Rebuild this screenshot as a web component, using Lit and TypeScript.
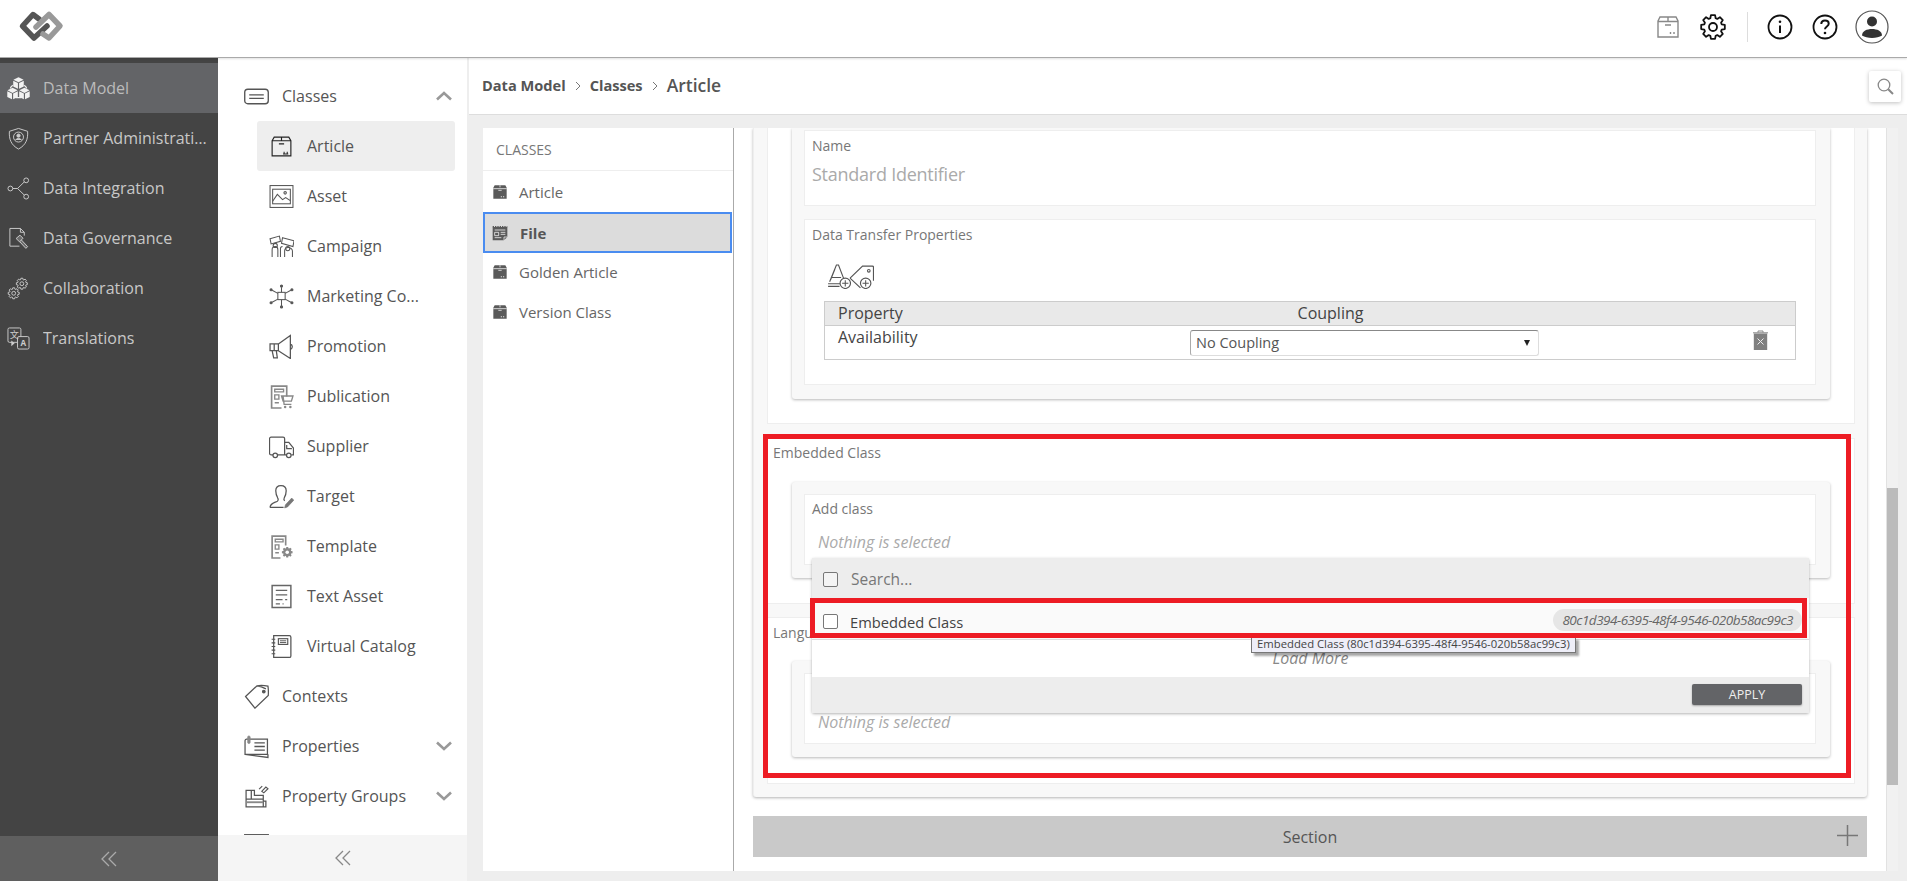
import { LitElement, css, html, svg } from "lit";
import { customElement } from "lit/decorators.js";

const gear = (cx: number, cy: number, r: number, teeth = 8) => {
  const pts: string[] = [];
  const step = (Math.PI * 2) / teeth;
  for (let i = 0; i < teeth; i++) {
    const a = i * step - step / 2;
    const at = (ang: number, rad: number) =>
      `${(cx + Math.cos(ang) * rad).toFixed(2)} ${(cy + Math.sin(ang) * rad).toFixed(2)}`;
    pts.push(at(a + step * 0.12, r * 0.76));
    pts.push(at(a + step * 0.28, r));
    pts.push(at(a + step * 0.72, r));
    pts.push(at(a + step * 0.88, r * 0.76));
  }
  return `M${pts.join("L")}Z`;
};

const cube = (x: number, y: number) => svg`
  <path d="M${x} ${y - 5.800}l5.300 2.700-5.300 2.700-5.300-2.700zM${x - 5.500} ${y - 2.200}l4.900 2.500v6l-4.900-2.500zM${x + 5.500} ${y - 2.200}l-4.900 2.500v6l4.900-2.500z" fill="currentColor" stroke="none" />
`;

const icons: Record<string, unknown> = {
  model: svg`<path d="M6 8.500C4 10 3.500 11 3.500 12M18 8.500c2 1.500 2.500 2.500 2.500 3.500M9 21.500h6" stroke-width="1.300" />${cube(12, 6)}${cube(5.800, 17)}${cube(18.200, 17)}`,
  shield: svg`<path d="M12 1.500 21.500 4.500c.6 8-1.800 14.500-9.500 18.500C4.300 19 1.900 12.500 2.500 4.500z" /><circle cx="12" cy="10.500" r="5.200" /><circle cx="12" cy="9" r="1.700" fill="currentColor" /><path d="M9 13.500c.6-2 5.400-2 6 0" fill="currentColor" />`,
  integration: svg`<circle cx="3.500" cy="12" r="2.500" /><circle cx="20" cy="3.500" r="2.500" /><circle cx="20" cy="20.500" r="2.500" /><path d="M6 12h5l7.200-7M11 12l7.200 7" />`,
  governance: svg`<path d="M13 20H3V1.500h11l4 4V9M14 1.500V5.500H18" /><path d="M9.500 12l4-3.500 3.200 3.200-3.600 3.800zM15 13.500l6.500 7-1.800 1.800-6.500-7" fill="currentColor" fill-opacity=".3" />`,
  collaboration: svg`<path d="${gear(15.500, 7, 5.800)}" /><circle cx="15.500" cy="7" r="2" /><path d="${gear(7, 17, 5.800)}" /><circle cx="7" cy="17" r="2" />`,
  translations: svg`<rect x="1" y="1" width="13.500" height="15" rx="1.500" /><rect x="11" y="10" width="12" height="13" rx="1.500" fill="#444" /><text x="7.500" y="11" font-size="9.500" fill="currentColor" stroke="none" text-anchor="middle" font-family="Noto Sans CJK SC, sans-serif">文</text><text x="17" y="20" font-size="8.500" font-weight="700" fill="currentColor" stroke="none" text-anchor="middle" font-family="Open Sans, sans-serif">A</text><path d="M4.500 14l3.500 3-3.500 3z" fill="currentColor" stroke="none" />`,
  classes: svg`<rect x="0.700" y="5" width="22.600" height="14" rx="3" stroke-width="1.300" /><path d="M5 10.400h14M5 13.800h14" stroke-width="1.300" />`,
  peek: svg`<rect x="0.700" y="0.700" width="22.600" height="22" stroke-width="1.300" />`,
  box: svg`<path d="M3 6.500 5 3h14l2 3.500V21H3zM3 6.500h18M12 3v3.500M9.500 9.500h5" stroke="#222" stroke-width="1.100" /><path d="M14.500 17v2M17.500 17v2M13.500 19.200h5" stroke="#222" />`,
  asset: svg`<rect x="1" y="1.500" width="22" height="21" /><rect x="3.500" y="5" width="17" height="14" /><path d="M3.500 16.500 8 10l5 5 3-2 4.500 3" /><circle cx="15.500" cy="8.500" r="1.200" />`,
  campaign: svg`<path d="M1 4.500 10 2l1 5-9 2.500zM13 3.500l11 3-1 5.500-11-3zM3 22v-7c0-2 1.500-3 3-3s2.500 1 2.500 3v7M15 22v-6c0-2 2-3.500 4-3s3.500 2 3.500 3.500V22M11 22v-8c0-1 1-2 2-2" /><circle cx="6" cy="11" r="2" /><circle cx="18" cy="14" r="2" />`,
  marketing: svg`<rect x="8.500" y="8" width="7" height="7" /><circle cx="12" cy="2" r="1" fill="currentColor" /><circle cx="12" cy="22" r="1" fill="currentColor" /><circle cx="2" cy="5.500" r="1" fill="currentColor" /><circle cx="22" cy="5.500" r="1" fill="currentColor" /><circle cx="2" cy="18" r="1" fill="currentColor" /><circle cx="22" cy="18" r="1" fill="currentColor" /><path d="M12 3v5M12 15v6M3 6l5.500 3M21 6l-5.500 3M3 17.500l5.500-3M21 17.500l-5.500-3" />`,
  promotion: svg`<path d="M1 9.500h8v6.500H1zM9 9.500 20.500 1.500v22L9 16M20.500 9.500c2.500 1.500 2.500 4 0 5.500M3 16l1.500 7h3.500l-1-7M5 9.500v6.500" stroke-width="1.200" />`,
  publication: svg`<path d="M17 12V2H2.500v21H12" stroke="#888" stroke-width="1.600" /><path d="M5.500 5h8.500v2.500H5.500zM5.500 10.500h4v4h-4zM5.500 18h4" stroke="#888" stroke-width="1.300" /><path d="M12 11.500h11l-1.500 5h-8zM13.500 11.500l1 8h7" stroke="#888" stroke-width="1.300" /><circle cx="15.500" cy="22" r="1.200" fill="#888" stroke="none" /><circle cx="20.500" cy="22" r="1.200" fill="#888" stroke="none" />`,
  supplier: svg`<path d="M4 20H2a1.500 1.500 0 0 1-1.500-1.500V4.500A1.500 1.500 0 0 1 2 3h11.500A1.500 1.500 0 0 1 15 4.500V20H8M15 8h4l4.500 5.500V20h-2M15 20h2M17 10.500v3.500h5" stroke-width="1.200" /><circle cx="6" cy="20.500" r="2.200" stroke-width="1.200" /><circle cx="19" cy="20.500" r="2.200" stroke-width="1.200" />`,
  target: svg`<path d="M1 22.500c0-4 4-4.500 7-6 1-.6 1-2 .4-3C7 11 6.500 8.500 6.500 6.500c0-3.200 2.200-5 5-5s5 1.800 5 5c0 2-.5 4.500-1.900 7-.5 1-.3 2 .4 2.700M1 22.500h13" stroke-width="1.200" /><path d="M15 23l.8-3 6-6.500 2 2-6 6.500z" fill="#777" stroke="#777" stroke-width=".6" />`,
  template: svg`<path d="M16 11V2H3v21h8" stroke="#888" stroke-width="1.600" /><path d="M6 5h7.500v2.500H6zM6 10.500h3.500v4H6zM6 18h3.500" stroke="#888" stroke-width="1.300" /><path d="${gear(17.500, 17.500, 5.200)}" fill="#888" stroke="none" /><circle cx="17.500" cy="17.500" r="1.700" fill="#fff" stroke="none" />`,
  textasset: svg`<path d="M3 1.500h18v21H3z" stroke="#666" stroke-width="1.400" /><path d="M6.500 6h11M6.500 10.500h11M6.500 15h6.500M15.500 15h2M6.500 19h4M13 19h1" stroke="#666" stroke-width="1.200" />`,
  catalog: svg`<path d="M4.500 1.500h15a1.500 1.500 0 0 1 1.500 1.500v18a1.500 1.500 0 0 1-1.500 1.500h-15z" stroke-width="1.200" /><path d="M2.500 5h3.500M2.500 8.500h3.500M2.500 12h3.500M2.500 15.500h3.500M2.500 19h3.500" stroke-width="1.100" /><rect x="9" y="4.500" width="9" height="5.500" stroke-width="1.100" /><path d="M10.500 6.500h6M10.500 8.200h6" stroke-width=".9" />`,
  contexts: svg`<path d="M1.500 12 12.500 1.700c3-.8 7-.5 10.500.3.500 3 .5 6 .3 9L10.500 23.200zM12.500 1.700c3 .3 6 1.500 8.500 3" stroke-width="1.200" /><circle cx="19" cy="7.200" r="1.300" fill="currentColor" />`,
  properties: svg`<path d="M1 6.500a1.500 1.500 0 0 1 1.500-1.500h20v14.500H1zM1 19.500l22 3v-3" stroke-width="1.200" /><path d="M10 8.500h10M10 12h10M10 15.500h10" stroke-width="1.300" /><path d="M3.500 8V3a1.200 1.200 0 0 1 2.400 0v5a1.200 1.200 0 0 1-2.400 0z" fill="#888" stroke="#888" stroke-width=".6" />`,
  groups: svg`<path d="M2 6h8v5h8.500v5.500H21V22H2zM2 14.500h16.500M7 6v8.500M18.500 16.500V22" stroke-width="1.200" /><path d="M2 17.500h16.500" stroke-width="1.800" stroke="#888" /><path d="M17 7l4-4 2 1.500-4 4zM14.500 5l3-3" stroke-width="1.100" />`,
  boxfill: svg`<path d="M2 5.500 4 2h16l2 3.500V22H2z" fill="currentColor" stroke="none" /><path d="M2 7h20M12 2v3M9.500 9.500h5M14 18v2M17.500 18v2" stroke="#fff" stroke-width="1.100" />`,
  filefill: svg`<path d="M1 3h22v15l-5 5H1z" fill="currentColor" stroke="none" /><path d="M1 2.500h22" stroke="currentColor" stroke-dasharray="2 1.500" stroke-width="2" /><path d="M4 7.500h16M4 11h6v5H4zM13 11h7M13 14h7M4 19h10" stroke="#fff" stroke-width="1.100" /><path d="M18 23v-5h5" stroke="#fff" stroke-width="1" />`,
  addtext: svg`<path d="M3.500 17 10 1h2l5 13M5.500 13h9M8.500 5l-4 10M2 21.500h11M2 19h12" stroke-width="1.100" /><circle cx="18.500" cy="18.500" r="5" fill="#fff" stroke-width="1.100" /><path d="M18.500 15.500v6M15.500 18.500h6" stroke-width="1" />`,
  addtag: svg`<path d="M1 13.500 13 2h9.500a1 1 0 0 1 1 1v13M11 23 1 13.500" stroke-width="1.100" /><circle cx="19" cy="6.500" r="1.300" stroke-width="1" /><circle cx="16" cy="18.500" r="5" stroke-width="1.100" /><path d="M16 15.500v6M13 18.500h6" stroke-width="1" />`,
};

const ic = (name: string, cls = "") => html`<svg class="ic ${cls}" viewBox="0 0 24 24" fill="none" stroke="currentColor" aria-hidden="true">${icons[name]}</svg>`;

const chev = (up: boolean) => html`<svg class="chev" viewBox="0 0 16 10" fill="none" stroke="#999" stroke-width="2.600"><path d="${up ? "M1 8.500 8 2l7 6.500" : "M1 1.500 8 8l7-6.500"}" /></svg>`;

const dbl = html`<svg class="dbl" viewBox="0 0 16 16" fill="none" stroke="currentColor" stroke-width="1.300"><path d="M8 1 1 8l7 7M15 1 8 8l7 7" /></svg>`;

const sideItems = [
  ["model", "Data Model"],
  ["shield", "Partner Administration"],
  ["integration", "Data Integration"],
  ["governance", "Data Governance"],
  ["collaboration", "Collaboration"],
  ["translations", "Translations"],
];

const classItems = [
  ["box", "Article"],
  ["asset", "Asset"],
  ["campaign", "Campaign"],
  ["marketing", "Marketing Co..."],
  ["promotion", "Promotion"],
  ["publication", "Publication"],
  ["supplier", "Supplier"],
  ["target", "Target"],
  ["template", "Template"],
  ["textasset", "Text Asset"],
  ["catalog", "Virtual Catalog"],
];

const listItems = [
  ["boxfill", "Article"],
  ["filefill", "File"],
  ["boxfill", "Golden Article"],
  ["boxfill", "Version Class"],
];

@customElement("app-root")
export class AppRoot extends LitElement {
  static styles = css`
    :host {
      display: block;
      position: relative;
      width: 100%;
      height: 100vh;
      overflow: hidden;
      font-family: "Open Sans", sans-serif;
      font-size: 16px;
      color: #555;
      background: #eee;
    }
    .ic {
      display: block;
      flex: none;
      width: 25px;
      height: 25px;
      stroke-width: 1;
    }

    .top {
      display: flex;
      align-items: center;
      box-sizing: border-box;
      height: 58px;
      padding: 0 18px;
      background: #fff;
      border-bottom: 1px solid #aaa;
      box-shadow: 0 1px 2px rgba(0, 0, 0, 0.12);
      position: relative;
      z-index: 2;
    }
    .logo {
      width: 46px;
      height: 33px;
      margin-top: -4px;
    }
    .tools {
      display: flex;
      align-items: center;
      margin-left: auto;
      margin-top: -3px;
    }
    .tools svg {
      display: block;
    }
    .t-box {
      width: 24px;
      height: 24px;
      margin-right: 20px;
      color: #888;
    }
    .t-gear {
      width: 26px;
      height: 26px;
      margin-right: 21px;
    }
    .t-div {
      width: 1px;
      height: 30px;
      background: #ddd;
      margin-right: 19px;
    }
    .t-round {
      width: 26px;
      height: 26px;
      margin-right: 19px;
    }
    .t-user {
      width: 34px;
      height: 34px;
      margin-left: -1.5px;
    }

    .body {
      display: grid;
      grid-template-columns: 218px 249px 1fr;
      height: calc(100vh - 58px);
    }

    .side {
      display: flex;
      flex-direction: column;
      background: #444;
      padding-top: 5px;
      box-sizing: border-box;
      color: #c8c8c8;
      min-width: 0;
    }
    .side-list {
      flex: 1;
    }
    .side-item {
      display: flex;
      align-items: center;
      gap: 13px;
      height: 50px;
      padding: 0 10px 0 7px;
    }
    .side-item .ic {
      width: 23px;
      height: 23px;
      color: #ccc;
    }
    .side-item span {
      overflow: hidden;
      white-space: nowrap;
      text-overflow: ellipsis;
    }
    .side-item.on {
      background: #636467;
      color: #bbb;
    }
    .side-item.on .ic {
      color: #f2f2f2;
    }
    .side-foot {
      display: flex;
      align-items: center;
      justify-content: center;
      height: 45px;
      background: #5f5f5f;
      color: #aaa;
    }
    .dbl {
      width: 16px;
      height: 16px;
    }

    .nav {
      display: flex;
      flex-direction: column;
      background: #fff;
      min-height: 0;
      min-width: 0;
    }
    .nav-list {
      flex: 1;
      overflow: hidden;
      padding-top: 13px;
      min-height: 0;
    }
    .nav-row {
      display: flex;
      align-items: center;
      gap: 13px;
      height: 50px;
      padding: 0 15px 0 26px;
      white-space: nowrap;
    }
    .nav-row .chev {
      width: 16px;
      height: 10px;
      margin-left: auto;
    }
    .nav-sub {
      display: flex;
      align-items: center;
      gap: 13px;
      height: 50px;
      width: 198px;
      box-sizing: border-box;
      margin-left: 39px;
      padding-left: 12px;
      border-radius: 3px;
      white-space: nowrap;
    }
    .nav-sub.on {
      background: #eee;
    }
    .nav-foot {
      display: flex;
      align-items: center;
      justify-content: center;
      height: 46px;
      background: #f5f5f5;
      color: #888;
    }

    .main {
      display: flex;
      flex-direction: column;
      padding-left: 2px;
      min-width: 0;
      min-height: 0;
    }
    .crumbs {
      display: flex;
      align-items: center;
      box-sizing: border-box;
      height: 57px;
      padding: 0 6px 0 13px;
      background: #fff;
      border-bottom: 1px solid #ddd;
      font-weight: 700;
      font-size: 14.6px;
      color: #555;
    }
    .crumbs > span {
      position: relative;
      top: -1px;
    }
    .crumbs .sep {
      width: 6px;
      height: 10px;
      margin: 0 9px;
    }
    .crumbs .cur {
      font-size: 17.5px;
      font-weight: 600;
    }
    .search {
      display: flex;
      align-items: center;
      justify-content: center;
      width: 32px;
      height: 31px;
      margin-left: auto;
      border-radius: 2px;
      box-shadow: 0 1px 4px rgba(0, 0, 0, 0.25);
    }
    .search svg {
      width: 17px;
      height: 17px;
    }

    .work {
      flex: 1;
      display: flex;
      min-height: 0;
      padding: 13px 9px 10px 14px;
    }
    .classes {
      flex: none;
      width: 250px;
      background: #fff;
      border-right: 1px solid #aaa;
      font-size: 15px;
      color: #666;
    }
    .classes-head {
      box-sizing: border-box;
      height: 43px;
      padding: 12px 13px 0;
      font-size: 14px;
      line-height: 20px;
      color: #777;
      border-bottom: 1px solid #eee;
      margin-bottom: 1px;
    }
    .cl-row {
      display: flex;
      align-items: center;
      gap: 11px;
      box-sizing: border-box;
      height: 40px;
      padding-left: 9px;
      margin-right: 1px;
    }
    .cl-row .ic {
      width: 16px;
      height: 16px;
      color: #5a5a5a;
    }
    .cl-row.on {
      height: 41px;
      margin-bottom: -1px;
      padding-left: 7px;
      gap: 12px;
      border: 2px solid #4a8cf0;
      background: #dcdcdc;
      font-weight: 700;
      color: #555;
    }

    .detail {
      flex: 1;
      display: flex;
      background: #fff;
      min-width: 0;
    }
    .scroll {
      flex: 1;
      overflow: hidden;
      padding: 0 19px;
      min-width: 0;
    }
    .track {
      flex: none;
      box-sizing: border-box;
      width: 12px;
      padding-top: 360px;
      background: #f1f1f1;
      border-left: 1px solid #e2e2e2;
    }
    .thumb {
      height: 297px;
      background: #bbb;
    }
    .outer {
      box-sizing: border-box;
      height: 669px;
      display: flex;
      flex-direction: column;
      gap: 14px;
      padding: 0 12px 0 13px;
      background: #f8f8f8;
      border-left: 1px solid #eee;
      box-shadow: 0 1px 3px rgba(0, 0, 0, 0.3);
      border-radius: 0 0 3px 3px;
    }
    .frame {
      background: #fff;
      border: 1px solid #eee;
      border-top-width: 1px;
      font-size: 14px;
      color: #777;
    }
    .frame.one {
      border-top: 0;
      padding-bottom: 25px;
      height: 296px;
      box-sizing: border-box;
    }
    .frame.two {
      height: 166px;
      box-sizing: border-box;
      margin-bottom: -1px;
      padding-top: 4px;
    }
    .frame.three {
      height: 167px;
      box-sizing: border-box;
      padding-top: 5px;
    }
    .frame-label {
      height: 20px;
      line-height: 20px;
      padding-left: 5px;
    }
    .two .frame-label {
      margin-bottom: 19px;
    }
    .three .frame-label {
      margin-bottom: 18px;
    }
    .card {
      margin: 0 24px;
      padding: 12px 14px 13px 12px;
      background: #f8f8f8;
      border-radius: 3px;
      box-shadow: 0 1px 3px rgba(0, 0, 0, 0.28);
    }
    .one .card {
      display: flex;
      flex-direction: column;
      gap: 13px;
      padding-top: 2px;
      padding-bottom: 14px;
      border-radius: 0 0 3px 3px;
    }
    .box {
      box-sizing: border-box;
      background: #fff;
      border: 1px solid #eee;
      padding: 5px 7px 0;
    }
    .box > label {
      display: block;
      height: 20px;
      line-height: 20px;
      font-size: 14px;
      color: #777;
    }
    .box.name {
      height: 76px;
    }
    .box.name .val {
      margin-top: 6px;
      font-size: 18px;
      line-height: 24px;
      letter-spacing: -0.25px;
      color: #aaa;
    }
    .box.pick {
      height: 71px;
      padding-top: 4px;
    }
    .none {
      margin: 13px 0 0 6px;
      line-height: 20px;
      font-size: 16px;
      font-style: italic;
      color: #aaa;
    }
    .three .none {
      margin-top: 14px;
    }
    .box.dtp {
      height: 166px;
    }
    .dtp-tools {
      display: flex;
      align-items: center;
      margin: 19px 0 12px 14px;
      color: #555;
    }
    .dtp-tools .ic {
      margin-right: -2px;
    }
    .table {
      margin: 0 12px;
      border: 1px solid #ccc;
      font-size: 16px;
      color: #444;
    }
    .thead,
    .trow {
      display: grid;
      grid-template-columns: 366px 279px 1fr;
    }
    .thead {
      height: 23px;
      line-height: 22px;
      background: #e9e9e9;
      border-bottom: 1px solid #ccc;
    }
    .thead span:first-child,
    .trow > span:first-child {
      padding-left: 13px;
    }
    .thead span:nth-child(2) {
      text-align: center;
    }
    .trow {
      grid-template-columns: 365px 349px 1fr;
      height: 33px;
      line-height: 22px;
    }
    .select {
      display: flex;
      align-items: center;
      justify-content: space-between;
      box-sizing: border-box;
      height: 26px;
      margin-top: 4px;
      padding: 0 8px 0 5px;
      border: 1px solid #ddd;
      border-top-color: #888;
      border-left-color: #aaa;
      border-radius: 3px;
      font-size: 14.5px;
      color: #555;
    }
    .select i {
      width: 0;
      height: 0;
      border-left: 3.5px solid transparent;
      border-right: 3.5px solid transparent;
      border-top: 6px solid #222;
    }
    .trash {
      width: 15px;
      height: 20px;
      margin: 4px 0 0 214px;
      display: block;
    }

    .section {
      margin-top: 19px;
      height: 41px;
      line-height: 42px;
      text-align: center;
      background: #c9c9c9;
      color: #555;
      position: relative;
    }
    .section svg {
      position: absolute;
      right: 9px;
      top: 9px;
      width: 21px;
      height: 21px;
    }

    .drop {
      position: absolute;
      left: 812px;
      top: 558px;
      width: 997px;
      height: 155px;
      display: grid;
      grid-template-rows: 40px 42px 37px 36px;
      background: #fff;
      border-radius: 2px;
      box-shadow: 0 1px 3px rgba(0, 0, 0, 0.3);
      font-size: 14.7px;
    }
    .drop-head,
    .drop-row {
      display: flex;
      align-items: center;
      padding-left: 11px;
    }
    .drop-head {
      gap: 13px;
      box-sizing: border-box;
      padding-top: 2px;
      background: #ededed;
      color: #777;
      font-size: 15.5px;
    }
    .drop-row {
      gap: 12px;
      padding: 6px 7px 0 11px;
      box-sizing: border-box;
      background: #fafafa;
      border-bottom: 1px solid #ddd;
      color: #444;
    }
    .cb {
      flex: none;
      box-sizing: border-box;
      width: 15px;
      height: 15px;
      border: 1.5px solid #777;
      border-radius: 2px;
      background: #fff;
    }
    .drop-head .cb {
      background: #f4f4f4;
    }
    .pill {
      margin-left: auto;
      padding: 0 9px;
      height: 22px;
      line-height: 22px;
      margin-top: -3px;
      border-radius: 11px;
      background: #e6e6e6;
      font-size: 13.5px;
      letter-spacing: -0.5px;
      font-style: italic;
      color: #666;
      white-space: nowrap;
    }
    .more {
      text-align: center;
      line-height: 36px;
      font-size: 16px;
      font-style: italic;
      color: #888;
    }
    .drop-foot {
      display: flex;
      align-items: center;
      justify-content: flex-end;
      padding-right: 7px;
      background: #ededed;
    }
    .apply {
      width: 110px;
      height: 21px;
      line-height: 21px;
      text-align: center;
      background: #636467;
      color: #eee;
      font-size: 12.5px;
      border-radius: 2px;
      margin-top: -1px;
      box-shadow: 0 1px 2px rgba(0, 0, 0, 0.3);
    }
    .tip {
      position: absolute;
      left: 1251px;
      top: 637px;
      box-sizing: border-box;
      height: 16px;
      padding: 0 5px;
      line-height: 14px;
      background: #eeeef8;
      border: 1px solid #777;
      border-top: 0;
      font-size: 11.3px;
      color: #444;
      white-space: nowrap;
      box-shadow: 3px 3px 2px rgba(0, 0, 0, 0.35);
    }
    .mark {
      position: absolute;
      box-sizing: border-box;
      border: 5px solid #ed1c24;
      pointer-events: none;
    }
    .mark.big {
      left: 763px;
      top: 434px;
      width: 1088px;
      height: 344px;
    }
    .mark.small {
      left: 810px;
      top: 598px;
      width: 997px;
      height: 40px;
    }
  `;

  private renderSide() {
    return html`
      <aside class="side">
        <div class="side-list">
          ${sideItems.map(
            ([icon, label], i) => html`
              <div class="side-item ${i === 0 ? "on" : ""}">
                ${ic(icon)}<span>${label}</span>
              </div>
            `
          )}
        </div>
        <div class="side-foot">${dbl}</div>
      </aside>
    `;
  }

  private renderNav() {
    return html`
      <nav class="nav">
        <div class="nav-list">
          <div class="nav-row">${ic("classes")}<span>Classes</span>${chev(true)}</div>
          ${classItems.map(
            ([icon, label], i) => html`
              <div class="nav-sub ${i === 0 ? "on" : ""}">${ic(icon)}<span>${label}</span></div>
            `
          )}
          <div class="nav-row">${ic("contexts")}<span>Contexts</span></div>
          <div class="nav-row">${ic("properties")}<span>Properties</span>${chev(false)}</div>
          <div class="nav-row">${ic("groups")}<span>Property Groups</span>${chev(false)}</div>
          <div class="nav-row">${ic("peek")}</div>
        </div>
        <div class="nav-foot">${dbl}</div>
      </nav>
    `;
  }

  private renderCrumbs() {
    const sep = html`<svg class="sep" viewBox="0 0 6 10" fill="none" stroke="#777" stroke-width="1"><path d="M1 1l4 4-4 4" /></svg>`;
    return html`
      <div class="crumbs">
        <span>Data Model</span>${sep}<span>Classes</span>${sep}<span class="cur">Article</span>
        <div class="search">
          <svg viewBox="0 0 17 17" fill="none" stroke="#888" stroke-width="1.300"><circle cx="7" cy="7" r="5.800" /><path d="M11.200 11.200 16 16" stroke-width="2" /></svg>
        </div>
      </div>
    `;
  }

  private renderDetail() {
    return html`
      <div class="detail">
        <div class="scroll">
          <div class="outer">
            <div class="frame one">
              <div class="card">
                <div class="box name">
                  <label>Name</label>
                  <div class="val">Standard Identifier</div>
                </div>
                <div class="box dtp">
                  <label>Data Transfer Properties</label>
                  <div class="dtp-tools">${ic("addtext")}${ic("addtag")}</div>
                  <div class="table">
                    <div class="thead"><span>Property</span><span>Coupling</span><span></span></div>
                    <div class="trow">
                      <span>Availability</span>
                      <div class="select">No Coupling<i></i></div>
                      <svg class="trash" viewBox="0 0 15 20"><path d="M5 2.500V1h5v1.500M0 2.800h15" fill="none" stroke="#888" stroke-width="1" /><path d="M.8 3.500h13.400V20H.8z" fill="#808080" /><path d="M4.500 8.500l6 6M10.500 8.500l-6 6" stroke="#eee" stroke-width="1" /></svg>
                    </div>
                  </div>
                </div>
              </div>
            </div>
            <div class="frame two">
              <div class="frame-label">Embedded Class</div>
              <div class="card">
                <div class="box pick">
                  <label>Add class</label>
                  <div class="none">Nothing is selected</div>
                </div>
              </div>
            </div>
            <div class="frame three">
              <div class="frame-label">Language</div>
              <div class="card">
                <div class="box pick">
                  <label>&nbsp;</label>
                  <div class="none">Nothing is selected</div>
                </div>
              </div>
            </div>
          </div>
          <div class="section">
            Section
            <svg viewBox="0 0 21 21" stroke="#777" stroke-width="1.500"><path d="M10.500 0v21M0 10.500h21" /></svg>
          </div>
        </div>
        <div class="track"><div class="thumb"></div></div>
      </div>
    `;
  }

  private renderOverlays() {
    return html`
      <div class="drop">
        <div class="drop-head"><span class="cb"></span><span>Search...</span></div>
        <div class="drop-row">
          <span class="cb"></span><span>Embedded Class</span>
          <span class="pill">80c1d394-6395-48f4-9546-020b58ac99c3</span>
        </div>
        <div class="more">Load More</div>
        <div class="drop-foot"><div class="apply">APPLY</div></div>
      </div>
      <div class="tip">Embedded Class (80c1d394-6395-48f4-9546-020b58ac99c3)</div>
      <div class="mark big"></div>
      <div class="mark small"></div>
    `;
  }

  protected render() {
    return html`
      <header class="top">
        <svg class="logo" viewBox="0 0 46 33" fill="none" stroke-width="5.500" stroke-linejoin="round" stroke-linecap="round">
          <path d="M21 9 15 4.500 4.500 16 16 28 29 16" stroke="#555" />
          <path d="M25 24l6 4 11-12L31 4.500 18 17" stroke="#999" />
        </svg>
        <div class="tools">
          <svg class="t-box" viewBox="0 0 24 24" fill="none" stroke="currentColor" stroke-width="1.400"><path d="M2 6 4 2h16l2 4v16H2zM2 6.500h20M12 2v4.500M9 10h6M14.500 17v2M18 17v2" /></svg>
          <svg class="t-gear" viewBox="0 0 26 26" fill="none" stroke="#111" stroke-width="1.800" stroke-linejoin="round"><path d="${gear(13, 13, 12)}" /><circle cx="13" cy="13" r="4" /></svg>
          <div class="t-div"></div>
          <svg class="t-round" viewBox="0 0 26 26" fill="none" stroke="#111" stroke-width="1.800"><circle cx="13" cy="13" r="11.500" /><path d="M13 11.500v7.500" stroke-width="2" /><circle cx="13" cy="7.800" r="1.300" fill="#111" stroke="none" /></svg>
          <svg class="t-round" viewBox="0 0 26 26" fill="none" stroke="#111" stroke-width="1.800"><circle cx="13" cy="13" r="11.500" /><path d="M9.300 10c0-2.300 1.700-3.500 3.700-3.500s3.700 1.200 3.700 3.200c0 2.800-3.700 2.800-3.700 5.600" stroke-width="2" /><circle cx="13" cy="19" r="1.300" fill="#111" stroke="none" /></svg>
          <svg class="t-user" viewBox="0 0 34 34"><circle cx="17" cy="17" r="16" fill="none" stroke="#555" stroke-width="1.200" /><circle cx="17" cy="11.500" r="5" fill="#333" /><path d="M7 25.500c0-4.500 5-6.500 10-6.500s10 2 10 6.500c-2.500 1.500-6 2.500-10 2.500s-7.500-1-10-2.500z" fill="#333" /></svg>
        </div>
      </header>
      <div class="body">
        ${this.renderSide()} ${this.renderNav()}
        <section class="main">
          ${this.renderCrumbs()}
          <div class="work">
            <div class="classes">
              <div class="classes-head">CLASSES</div>
              ${listItems.map(
                ([icon, label], i) => html`
                  <div class="cl-row ${i === 1 ? "on" : ""}">${ic(icon)}<span>${label}</span></div>
                `
              )}
            </div>
            ${this.renderDetail()}
          </div>
        </section>
      </div>
      ${this.renderOverlays()}
    `;
  }
}
